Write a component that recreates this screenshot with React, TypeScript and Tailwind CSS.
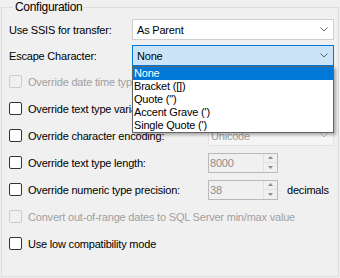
import React from 'react'

function Chevron({ color = '#606060' }: { color?: string }) {
  return (
    <svg width="8" height="5" viewBox="0 0 8 5" className="shrink-0">
      <polyline points="0.5,0.5 4,4 7.5,0.5" fill="none" stroke={color} strokeWidth="1" />
    </svg>
  )
}

function Check({ disabled }: { disabled?: boolean }) {
  return (
    <span
      className={
        disabled
          ? 'w-[13px] h-[13px] shrink-0 rounded-[2px] border border-[#cccccc] bg-[#f0f0f0]'
          : 'w-[13px] h-[13px] shrink-0 rounded-[2px] border border-[#333333] bg-white'
      }
    />
  )
}

function Spin({ value }: { value: string }) {
  return (
    <div className="w-[70px] h-[20px] border border-[#b9b9b9] bg-[#f0f0f0] flex items-center">
      <span className="flex-1 pl-[1px] text-[#8d8d8d]">{value}</span>
      <div className="w-[14px] h-full flex flex-col border-l border-[#e0e0e0]">
        <div className="flex-1 flex items-center justify-center border-b border-[#e0e0e0]">
          <svg width="5" height="3" viewBox="0 0 5 3">
            <polygon points="0,3 2.5,0 5,3" fill="#8d8d8d" />
          </svg>
        </div>
        <div className="flex-1 flex items-center justify-center">
          <svg width="5" height="3" viewBox="0 0 5 3">
            <polygon points="0,0 2.5,3 5,0" fill="#8d8d8d" />
          </svg>
        </div>
      </div>
    </div>
  )
}

const escapeOptions = ['None', 'Bracket ([])', 'Quote (")', "Accent Grave (')", "Single Quote (')"]

export default function App() {
  return (
    <div className="w-[340px] h-[278px] bg-[#f0f0f0] text-[11px] tracking-[-0.2px] leading-[14px] text-black font-['Segoe_UI','Liberation_Sans',sans-serif] overflow-hidden">
      <fieldset className="ml-[1px] w-[338px] h-[277px] border border-[#dcdcdc] pl-[7px]">
        <legend className="ml-[4px] px-[2px] leading-[14px] text-[12px] tracking-[-0.3px]">Configuration</legend>

        <div className="pt-[2px] flex flex-col">
          {/* Use SSIS */}
          <div className="h-[27px] flex items-center">
            <span className="w-[123px]">Use SSIS for transfer:</span>
            <div className="w-[202px] h-[21px] border border-[#cfcfcf] bg-white flex items-center pl-[4px] pr-[5px]">
              <span className="flex-1">As Parent</span>
              <Chevron />
            </div>
          </div>

          {/* Escape character */}
          <div className="h-[25px] flex items-center">
            <span className="w-[123px]">Escape Character:</span>
            <div className="relative w-[202px] h-[21px]">
              <div className="w-full h-full border border-[#0078d7] bg-[#cce4f7] flex items-center pl-[4px] pr-[5px]">
                <span className="flex-1">None</span>
                <Chevron />
              </div>
              <ul className="absolute top-[21px] left-0 w-[202px] border border-[#646464] bg-white shadow-[2px_2px_3px_rgba(0,0,0,0.3)] z-10">
                {escapeOptions.map((o, i) => (
                  <li
                    key={o}
                    className={
                      i === 0
                        ? 'h-[13px] leading-[13px] pl-[1px] bg-[#0078d7] text-white'
                        : 'h-[13px] leading-[13px] pl-[1px]'
                    }
                  >
                    {o}
                  </li>
                ))}
              </ul>
            </div>
          </div>

          <div className="h-[27px] flex items-center gap-[6px]">
            <Check disabled />
            <span className="text-[#a0a0a0]">Override date time type</span>
          </div>

          <div className="h-[27px] flex items-center gap-[6px]">
            <Check />
            <span>Override text type variant</span>
          </div>

          <div className="h-[27px] flex items-center">
            <div className="w-[199px] flex items-center gap-[6px]">
              <Check />
              <span>Override character encoding:</span>
            </div>
            <div className="w-[126px] h-[21px] border border-[#e3e3e3] bg-[#f5f5f5] flex items-center pl-[2px] pr-[5px]">
              <span className="flex-1 text-[#a0a0a0]">Unicode</span>
              <Chevron color="#c0c0c0" />
            </div>
          </div>

          <div className="h-[27px] flex items-center">
            <div className="w-[199px] flex items-center gap-[6px]">
              <Check />
              <span>Override text type length:</span>
            </div>
            <Spin value="8000" />
          </div>

          <div className="h-[27px] flex items-center">
            <div className="w-[199px] flex items-center gap-[6px]">
              <Check />
              <span>Override numeric type precision:</span>
            </div>
            <Spin value="38" />
            <span className="ml-[9px]">decimals</span>
          </div>

          <div className="h-[27px] flex items-center gap-[6px]">
            <Check disabled />
            <span className="text-[#a0a0a0]">Convert out-of-range dates to SQL Server min/max value</span>
          </div>

          <div className="h-[27px] flex items-center gap-[6px]">
            <Check />
            <span>Use low compatibility mode</span>
          </div>
        </div>
      </fieldset>
    </div>
  )
}
